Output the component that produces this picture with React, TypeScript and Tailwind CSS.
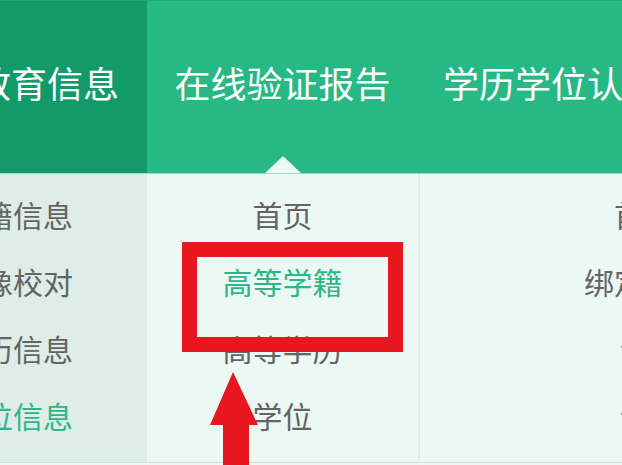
import React from 'react';

const navItems = [
  { label: '教育信息', width: 'w-[200px] -ml-[53px]', active: false, dark: true },
  { label: '在线验证报告', width: 'w-[271px]', active: true, dark: false },
  { label: '学历学位认证', width: 'w-[300px]', active: false, dark: false },
];

const leftLinks = [
  { label: '学籍信息', on: false },
  { label: '图像校对', on: false },
  { label: '学历信息', on: false },
  { label: '学位信息', on: true },
];

const midLinks = [
  { label: '首页', on: false },
  { label: '高等学籍', on: true },
  { label: '高等学历', on: false },
  { label: '学位', on: false },
];

const rightLinks = ['首页', '绑定学籍', '认证', '说明'];

const App = () => {
  return (
    <div
      className="relative w-[622px] h-[465px] overflow-hidden bg-[#f2f7f5]"
      style={{ fontFamily: '"Noto Sans CJK SC", "Noto Sans", sans-serif' }}
    >
      {/* top nav */}
      <div className="flex h-[174px] bg-[#27b985] border-t border-[#23a57a] border-b border-b-[#9fdcc6]">
        {navItems.map((item) => (
          <div
            key={item.label}
            className={`relative shrink-0 flex items-center justify-center whitespace-nowrap text-[36px] leading-none text-white pb-[10px] ${item.width} ${
              item.dark ? 'bg-[#129a6b]' : ''
            } ${item.label === '学历学位认证' ? 'justify-start pl-[25px]' : ''}`}
          >
            {item.label}
            {item.active && (
              <span className="absolute bottom-0 left-1/2 -translate-x-1/2 w-0 h-0 border-x-[18px] border-x-transparent border-b-[17px] border-b-[#ebf8f4]" />
            )}
          </div>
        ))}
      </div>

      {/* dropdown */}
      <div className="flex h-[289px] bg-[#ebf8f4] border-b border-[#c3e6d9] text-[30px] leading-none">
        <div className="w-[147px] shrink-0 bg-[#deede8] pt-[6px]">
          {leftLinks.map((l) => (
            <div
              key={l.label}
              className={`h-[67px] flex items-center justify-end pr-[74px] whitespace-nowrap ${
                l.on ? 'text-[#2bb889]' : 'text-[#646464]'
              }`}
            >
              <span className="shrink-0">{l.label}</span>
            </div>
          ))}
        </div>
        <div className="w-[271px] shrink-0 pt-[6px]">
          {midLinks.map((l) => (
            <div
              key={l.label}
              className={`h-[67px] flex items-center justify-center whitespace-nowrap ${
                l.on ? 'text-[#2bb889]' : 'text-[#646464]'
              }`}
            >
              {l.label}
            </div>
          ))}
        </div>
        <div className="w-[450px] shrink-0 border-l-2 border-[#dcefe8] pt-[6px]">
          {rightLinks.map((l, i) => (
            <div
              key={l}
              className={`h-[67px] flex items-center whitespace-nowrap text-[#646464] ${
                i > 1 ? 'justify-start pl-[200px]' : 'justify-center'
              }`}
            >
              {l}
            </div>
          ))}
        </div>
      </div>

      {/* red highlight box */}
      <div className="absolute left-[182px] top-[242px] w-[221px] h-[110px] border-[15px] border-[#e8161f]" />

      {/* red arrow */}
      <svg className="absolute left-[205px] top-[368px]" width="60" height="100" viewBox="0 0 60 100">
        <polygon points="28,4 53,57 44,57 44,100 18,100 18,57 5,57" fill="#e8161f" />
      </svg>
    </div>
  );
};

export default App;
